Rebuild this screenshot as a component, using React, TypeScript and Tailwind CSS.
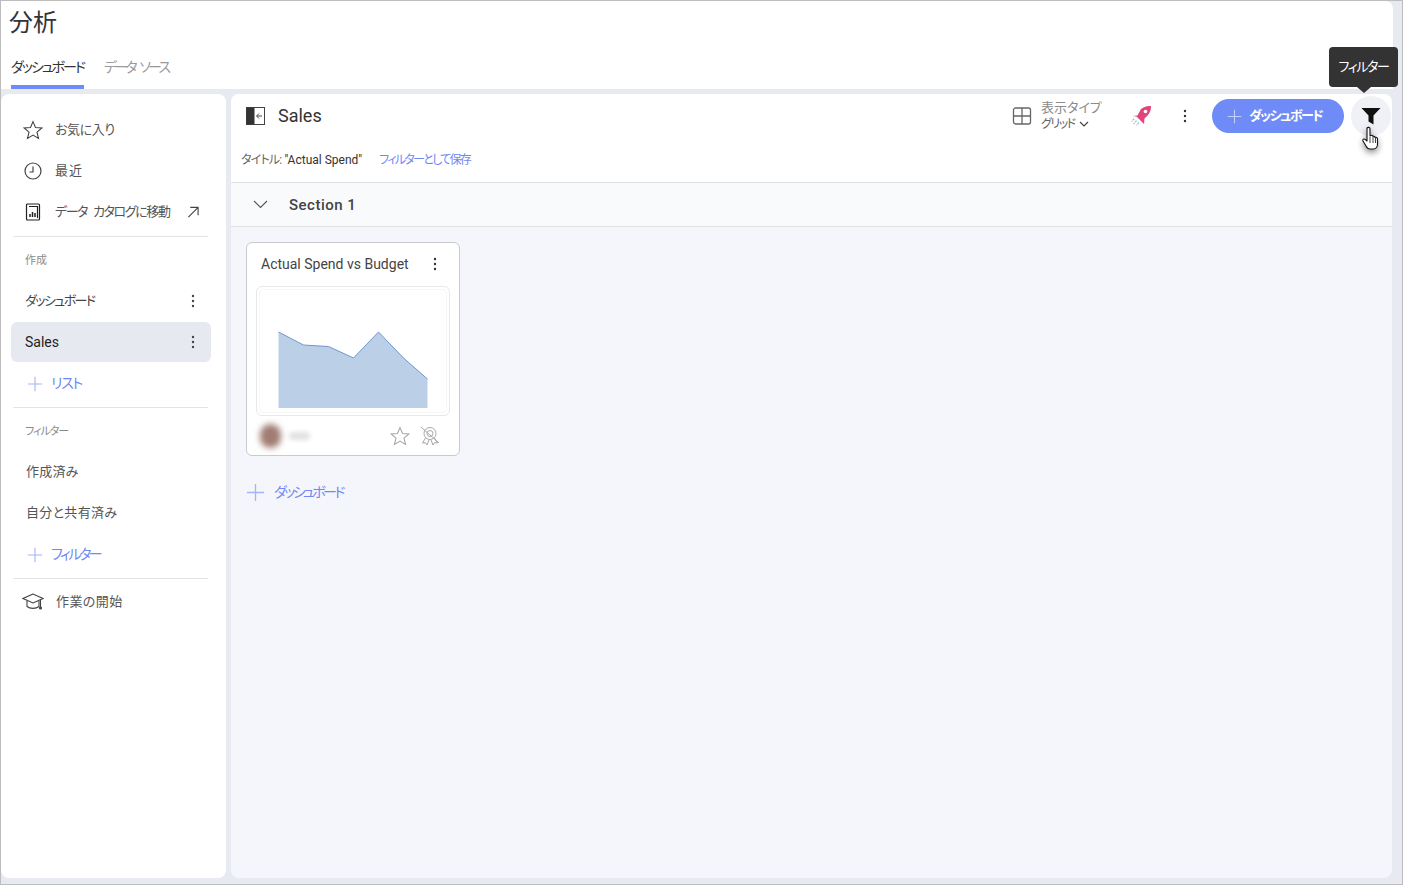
import React from "react";

const jp = { fontFamily: '"Roboto","Noto Sans CJK JP",sans-serif' };

function Kebab({ className = "" }: { className?: string }) {
  return (
    <svg width="4" height="14" viewBox="0 0 4 14" className={className} fill="currentColor">
      <circle cx="2" cy="2" r="1.2" />
      <circle cx="2" cy="7" r="1.2" />
      <circle cx="2" cy="12" r="1.2" />
    </svg>
  );
}

function Plus({ size = 20, color = "#a3b5fb" }: { size?: number; color?: string }) {
  return (
    <svg width={size} height={size} viewBox="0 0 20 20" fill="none" stroke={color} strokeWidth="1.4" className="shrink-0">
      <path d="M10 1v18M1 10h18" />
    </svg>
  );
}

function Star({ size = 20, color = "#444" }: { size?: number; color?: string }) {
  return (
    <svg width={size} height={size} viewBox="0 0 20 20" fill="none" stroke={color} strokeWidth="1.1" strokeLinejoin="miter">
      <path d="M10 1.6l2.5 5.9 6.4.5-4.9 4.2 1.5 6.2L10 15.1l-5.5 3.3L6 12.2 1.1 8l6.4-.5z" />
    </svg>
  );
}

function NavRow({ icon, label, labelClass, right }: { icon: React.ReactNode; label: string; labelClass: string; right?: React.ReactNode }) {
  return (
    <div className="flex h-[41px] items-center pl-[22px] pr-[27px]">
      <span className="flex w-[20px] shrink-0 justify-center">{icon}</span>
      <span className={`ml-[12px] whitespace-nowrap text-[13px] text-[#555] ${labelClass}`}>{label}</span>
      {right && <span className="ml-auto flex">{right}</span>}
    </div>
  );
}

function SubRow({ label, active }: { label: string; active?: boolean }) {
  return (
    <div className={`ml-[10px] mr-[15px] flex h-[40px] items-center rounded-[6px] pl-[14px] pr-[16px] ${active ? "bg-[#e6e9f0] text-[14px] text-[#222]" : "pt-[1px] text-[13px] tracking-[-1.6px] text-[#444]"}`}>
      <span>{label}</span>
      <Kebab className="ml-auto text-[#444]" />
    </div>
  );
}

function AddRow({ label, short }: { label: string; short?: boolean }) {
  return (
    <div className={`flex items-center pl-[26px] text-[14px] text-[#7088f5] ${short ? "h-[44px] pb-[3px] tracking-[-2.4px]" : "h-[45px] pb-[2px] tracking-[-1.3px]"}`}>
      <Plus size={16} />
      <span className="ml-[8px]">{label}</span>
    </div>
  );
}

function Divider() {
  return <div className="ml-[12px] mr-[18px] h-px bg-[#e2e3e6]" />;
}

function Sidebar() {
  return (
    <aside className="w-[225px] shrink-0 rounded-[8px] bg-white pt-[15px]">
      <NavRow icon={<Star />} label="お気に入り" labelClass="tracking-[-0.4px]" />
      <NavRow
        icon={
          <svg width="18" height="18" viewBox="0 0 18 18" fill="none" stroke="#444" strokeWidth="1.2">
            <circle cx="9" cy="9" r="8" />
            <path d="M9 4.5V10H5.5" />
          </svg>
        }
        label="最近"
        labelClass="tracking-[1px]"
      />
      <NavRow
        icon={
          <svg width="16" height="18" viewBox="0 0 16 18" fill="none" stroke="#222" strokeWidth="1.2">
            <rect x="1.5" y="1" width="13" height="16" rx="1" />
            <path d="M4 3.5h8.5V15" />
            <path d="M5 14v-3M7.5 14v-5M10 14v-4" strokeWidth="1.5" />
          </svg>
        }
        label="データ カタログに移動"
        labelClass="tracking-[-1.4px] [word-spacing:4px]"
        right={
          <svg width="12" height="12" viewBox="0 0 13 13" fill="none" stroke="#444" strokeWidth="1.2">
            <path d="M1.5 12L12 1.5M3.5 1.5H12V10" />
          </svg>
        }
      />
      <div className="mt-[4px]"><Divider /></div>
      <div className="flex h-[43px] items-center pl-[24px] pt-[5px] text-[11px] text-[#8a8a8a]">作成</div>
      <SubRow label="ダッシュボード" />
      <div className="h-[2px]" />
      <SubRow label="Sales" active />
      <AddRow label="リスト" />
      <Divider />
      <div className="flex h-[44px] items-center pl-[24px] pt-[5px] text-[11px] tracking-[-1px] text-[#8a8a8a]">フィルター</div>
      <div className="flex h-[39px] items-center pl-[25px] text-[13px] tracking-[0.2px] text-[#555]">作成済み</div>
      <div className="flex h-[43px] items-center pl-[25px] text-[13px] tracking-[0.3px] text-[#555]">自分と共有済み</div>
      <AddRow label="フィルター" short />
      <Divider />
      <div className="flex h-[45px] items-center pl-[21px]">
        <svg width="22" height="20" viewBox="0 0 22 20" fill="none" stroke="#444" strokeWidth="1.1" className="shrink-0">
          <path d="M11 2L1 6.500l10 4.500 10-4.500z" />
          <path d="M5 9v5.500c3 2.500 9 2.500 12 0V9" />
          <path d="M18.500 8v7" />
          <circle cx="18.500" cy="16" r="1" fill="#444" />
        </svg>
        <span className="ml-[12px] text-[13px] tracking-[0.4px] text-[#555]">作業の開始</span>
      </div>
    </aside>
  );
}

function Card() {
  return (
    <div className="w-[214px] rounded-[6px] border border-[#c9cacd] bg-white">
      <div className="flex h-[43px] items-center pl-[14px] pr-[22px] text-[14px] text-[#444]">
        <span>Actual Spend vs Budget</span>
        <Kebab className="-mt-[1px] ml-auto text-[#333]" />
      </div>
      <div className="mx-[9px] h-[130px] rounded-[6px] border border-[#e8e8ea] p-[2px]">
        <div className="h-full rounded-[4px] border border-[#f6f6f7]">
          <svg width="186" height="122" viewBox="0 0 186 122">
            <path d="M18.500 42L43.500 55L68.500 56.500L93.500 68L118.500 42L143.500 68L167.500 89V118H18.500Z" fill="#bbcfe7" />
            <path d="M18.500 42L43.500 55L68.500 56.500L93.500 68L118.500 42L143.500 68L167.500 89" fill="none" stroke="#6e98cf" strokeWidth="1" />
          </svg>
        </div>
      </div>
      <div className="flex h-[39px] items-center pl-[13px] pr-[19px]">
        <span className="h-[24px] w-[21px] rounded-full bg-[#a07c72] blur-[3px]" />
        <span className="ml-[8px] h-[8px] w-[21px] rounded-full bg-[#e2e2e2] blur-[2px]" />
        <span className="ml-auto flex items-center gap-[10px]">
          <Star size={20} color="#a8a8a8" />
          <svg width="20" height="20" viewBox="0 0 20 20" fill="none" stroke="#a8a8a8" strokeWidth="1">
            <circle cx="10" cy="7.500" r="6" />
            <circle cx="10" cy="7.500" r="3" />
            <path d="M5.500 12L2.500 17l3-.3L7 19l2-5M14.500 12l3 5-3-.3L13 19l-2-5M1 1l18 16" />
          </svg>
        </span>
      </div>
    </div>
  );
}

function Main() {
  return (
    <main className="flex min-w-0 flex-1 flex-col rounded-[8px] bg-[#f5f6fb]">
      <div className="rounded-t-[8px] bg-white">
        <div className="flex h-[44px] items-center pl-[15px] pr-[1px]">
          <svg width="20" height="20" viewBox="0 0 20 20" className="shrink-0">
            <rect x="0.500" y="1.500" width="18" height="17" fill="#fff" stroke="#444" />
            <rect x="0.500" y="1.500" width="8" height="17" fill="#333" />
            <path d="M16 10H11M13 7.500L10.500 10l2.500 2.500" fill="none" stroke="#444" strokeWidth="1" />
          </svg>
          <span className="-mt-[2px] ml-[12px] text-[18px] text-[#333]">Sales</span>
          <svg width="20" height="18" viewBox="0 0 20 18" fill="none" stroke="#666" strokeWidth="1.3" className="ml-auto shrink-0">
            <rect x="1.500" y="1" width="17" height="16" rx="2" />
            <path d="M10 1v16M1.500 9h17" />
          </svg>
          <div className="ml-[9px] flex w-[60px] flex-col leading-[16px]">
            <span className="whitespace-nowrap text-[13px] text-[#8a8a8a]">表示タイプ</span>
            <span className="flex items-center whitespace-nowrap text-[12px] text-[#666]">
              <span className="tracking-[-1.5px]">グリッド</span>
              <svg width="10" height="6" viewBox="0 0 10 6" fill="none" stroke="#444" strokeWidth="1.2" className="ml-[4px]">
                <path d="M1 1l4 4 4-4" />
              </svg>
            </span>
          </div>
          <svg width="22" height="22" viewBox="0 0 22 22" className="ml-[29px] shrink-0">
            <path d="M21 1c0 3-.5 6-3 9l-3.500 3.500-.5 5.500-3.500-3.500-4-4L2.500 11l5-.5L11 4c3-2.500 7-3 10-3z" fill="#e2447c" />
            <circle cx="15.500" cy="6.500" r="1.800" fill="#fff" />
            <path d="M6.500 15.500l-3 3.500M9 17.500l-2.500 3M4 14l-2.500 2.500" stroke="#7fb4e8" strokeWidth="1.100" strokeDasharray="2 1" />
          </svg>
          <Kebab className="ml-[31px] text-[#333]" />
          <div className="ml-[25px] flex h-[34px] w-[132px] items-center rounded-full bg-[#6f8bf7] pl-[15px]">
            <Plus size={15} color="#c3cffc" />
            <span className="ml-[7px] text-[13px] font-bold tracking-[-1.5px] text-white">ダッシュボード</span>
          </div>
          <div className="relative ml-[7px] flex size-[40px] shrink-0 items-center justify-center rounded-full bg-[#f0f1f7]">
            <svg width="20" height="18" viewBox="0 0 20 18" fill="#111">
              <path d="M0.500 1h19l-7 7.500V17.500l-5-3V8.500z" />
            </svg>
            <svg width="20" height="26" viewBox="0 0 20 26" className="absolute left-[10px] top-[30px] drop-shadow-[0_3px_3px_rgba(0,0,0,0.45)]">
              <path d="M6 2c1-1 3-1 3 1v7l1-.5c1-.5 2 0 2 1 1-.5 2 0 2 1 1-.5 2.500 0 2.500 1.500V18c0 2.500-1.500 5-4 5H9c-2 0-3-1-4-3L2 15c-.5-1 0-2 1-2s2 1 3 2V3z" fill="#fff" stroke="#111" strokeWidth="1.100" strokeLinejoin="round" />
              <path d="M9 11v6M12 11v6M14.500 12v5" stroke="#111" strokeWidth="0.800" />
            </svg>
            <div className="absolute bottom-[49px] right-[-7px] flex h-[40px] w-[69px] items-center justify-center rounded-[4px] bg-[#333] text-[13px] tracking-[-1.4px] text-white">
              フィルター
              <span className="absolute bottom-[-6px] left-1/2 size-0 -translate-x-1/2 border-x-[7px] border-t-[6px] border-x-transparent border-t-[#333]" />
            </div>
          </div>
        </div>
        <div className="flex h-[44px] items-center pl-[10px] text-[12px]">
          <span className="tracking-[-0.8px] text-[#666]">タイトル:</span>
          <span className="ml-[3px] text-[#333]">"Actual Spend"</span>
          <span className="ml-[17px] tracking-[-1.7px] text-[#7088f5]">フィルターとして保存</span>
        </div>
      </div>
      <div className="flex h-[45px] items-center border-y border-[#e0e1e4] bg-[#f9fafc] pl-[22px]">
        <svg width="15" height="9" viewBox="0 0 15 9" fill="none" stroke="#555" strokeWidth="1.1">
          <path d="M1 1l6.500 6.500L14 1" />
        </svg>
        <span className="ml-[21px] pt-[2px] text-[15px] font-medium tracking-[0.5px] text-[#444]">Section 1</span>
      </div>
      <div className="flex flex-1 flex-col items-start pl-[15px] pt-[15px]">
        <Card />
        <div className="mt-[26px] flex items-center text-[14px] tracking-[-2.600px] text-[#7088f5]">
          <Plus size={19} />
          <span className="ml-[9px]">ダッシュボード</span>
        </div>
      </div>
    </main>
  );
}

export default function App() {
  return (
    <div className="flex h-[885px] w-[1403px] flex-col overflow-hidden border border-[#bdbdbd] bg-[#e8eaf2] [font-feature-settings:'palt']" style={jp}>
      <header className="mr-[9px] h-[88px] shrink-0 rounded-tr-[8px] bg-white pl-[10px]">
        <h1 className="-ml-[2px] pt-[6px] text-[24px] leading-[32px] text-[#333]">分析</h1>
        <div className="mt-[12px] flex">
          <div className="flex h-[38px] items-center border-b-[4px] border-[#6f8bf7] pb-[2px] text-[14px] tracking-[-2px] text-[#333]">ダッシュボード</div>
          <div className="ml-[20px] flex h-[38px] items-center pb-[6px] text-[14px] tracking-[-2.800px] text-[#9a9a9a] [word-spacing:4px]">データ ソース</div>
        </div>
      </header>
      <div className="flex min-h-0 flex-1 gap-[5px] pb-[6px] pr-[10px] pt-[5px]">
        <Sidebar />
        <Main />
      </div>
    </div>
  );
}
